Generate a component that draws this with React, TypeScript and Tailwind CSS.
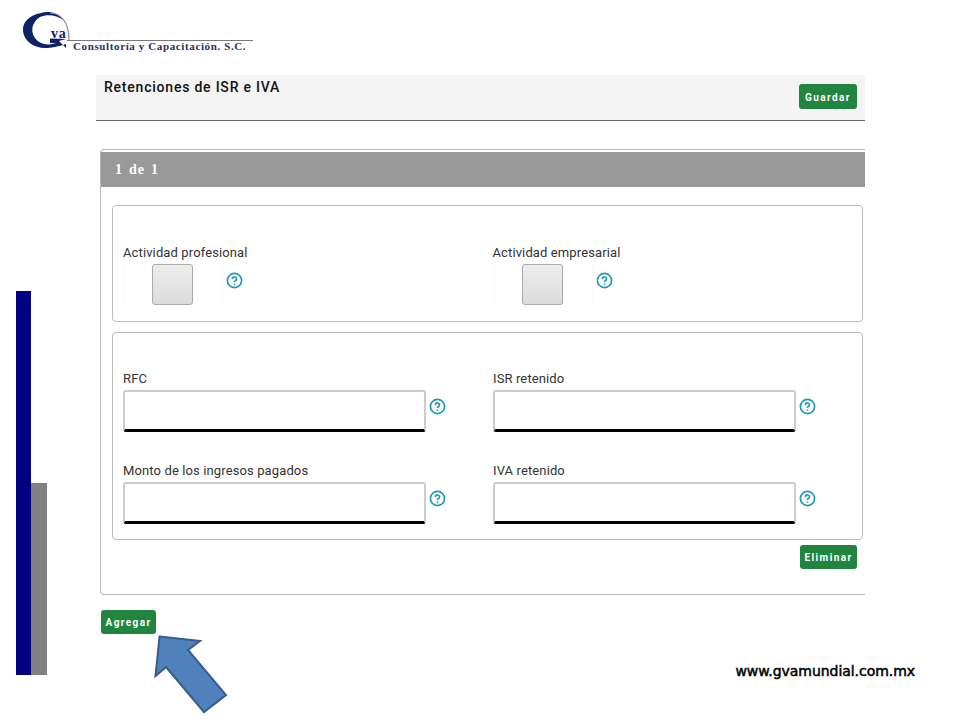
import { CircleHelp } from "lucide-react";

function Help() {
  return <CircleHelp size={17} strokeWidth={2.4} className="text-[#1f9ab5] shrink-0" />;
}

function Btn({ label, w }: { label: string; w: string }) {
  return (
    <button className={`${w} h-[24px] rounded-[3px] bg-[#218540] text-white text-[10px] font-bold tracking-[1.4px] font-['Roboto',sans-serif] flex items-center justify-center pt-[1px]`}>
      {label}
    </button>
  );
}

function Toggle({ label }: { label: string }) {
  return (
    <div className="w-[370px]">
      <div className="text-[13px] leading-[16px] text-[#333] tracking-[0.12px]">{label}</div>
      <div className="flex items-center mt-[3px]">
        <div className="w-[100px] h-[41px] flex pl-[28px] border-x border-[#fafafa]">
          <div className="w-[41px] h-[41px] rounded-[3px] border border-[#aaa] bg-gradient-to-b from-[#ececec] to-[#dcdcdc]" />
        </div>
        <div className="ml-[3px] -mt-[9px]"><Help /></div>
      </div>
    </div>
  );
}

function Field({ label }: { label: string }) {
  return (
    <div className="w-[370px]">
      <div className="text-[13px] leading-[16px] text-[#333] tracking-[0.12px]">{label}</div>
      <div className="flex items-center mt-[3px]">
        <div className="w-[303px] h-[42px] rounded-[3px] border-2 border-[#ccc] border-b-[3px] border-b-black bg-white" />
        <div className="ml-[3px] -mt-[10px]"><Help /></div>
      </div>
    </div>
  );
}

function Logo() {
  return (
    <svg width="260" height="60" viewBox="0 0 260 60" className="block absolute left-0 top-0">
      <path d="M63 20 C58 12 48 11 41 13 C29 15 22 23 23 31 C24 42 36 49 47 48 C54 47.500 60 46 66 44 L66 48 L59 41 L66 39 L50 38.500 L50 43 L56 43 C48 46 39 44 35 38 C30 31 32 22 40 17 C47 14 57 15 63 20 Z" fill="#0d2366" />
      <path d="M50 13 C60 13 69 21 69 40" fill="none" stroke="#8a8f99" strokeWidth="1.200" />
      <text x="51" y="38" fontFamily="'Liberation Serif',serif" fontWeight="700" fontSize="14" letterSpacing="0.800" fill="#0d2366">va</text>
      <line x1="67" y1="40.500" x2="253" y2="40.500" stroke="#777" strokeWidth="1" />
      <text x="73" y="50" fontFamily="'Liberation Serif',serif" fontWeight="700" fontSize="11" letterSpacing="0.620" fill="#26325f">Consultoría y Capacitación. S.C.</text>
    </svg>
  );
}

export default function App() {
  return (
    <div className="relative w-[960px] h-[720px] overflow-hidden bg-white font-['Roboto',sans-serif]">
      <Logo />
      <div className="flex pt-[75px]">
        <div className="w-[96px] pl-[16px] pt-[216px] flex items-start">
          <div className="w-[15px] h-[384px] bg-[#000080]" />
          <div className="w-[16px] h-[192px] mt-[192px] bg-[#808080]" />
        </div>
        <div className="w-[819px]">
          <div className="w-[769px] h-[46px] bg-[#f4f4f4] border-b border-[#666] flex justify-between pl-[8px] pr-[8px]">
            <div className="text-[14px] leading-[16px] mt-[4px] font-medium tracking-[0.78px] text-[#111]">Retenciones de ISR e IVA</div>
            <div className="mt-[9px] h-[25px]"><Btn label="Guardar" w="w-[58px] !h-[25px]" /></div>
          </div>

          <div className="ml-[4px] mt-[28px] w-[765px] h-[446px] border border-r-0 border-[#bbb] rounded-l-[4px] pt-[2px]">
            <div className="h-[35px] bg-[#999] flex items-center pl-[14px] text-white font-bold text-[14px] tracking-[0.8px] [word-spacing:2px] font-['Liberation_Serif',serif]">1 de 1</div>
            <div className="ml-[11px] w-[751px] mt-[18px] h-[117px] border border-[#bbb] rounded-[4px] pl-[10px] pt-[39px] flex">
              <Toggle label="Actividad profesional" />
              <Toggle label="Actividad empresarial" />
            </div>
            <div className="ml-[11px] w-[751px] mt-[10px] h-[208px] border border-[#bbb] rounded-[4px] pl-[10px] pt-[38px] grid grid-cols-[370px_370px] gap-y-[31px] content-start">
              <Field label="RFC" />
              <Field label="ISR retenido" />
              <Field label="Monto de los ingresos pagados" />
              <Field label="IVA retenido" />
            </div>
            <div className="flex justify-end pr-[8px] mt-[5px]"><Btn label="Eliminar" w="w-[57px]" /></div>
          </div>

          <div className="flex justify-between items-start pl-[5px] mt-[15px]">
            <Btn label="Agregar" w="w-[55px]" />
            <div className="mt-[52px] text-[14px] leading-[18px] font-normal tracking-[-0.05px] [-webkit-text-stroke:0.5px_black] font-['DejaVu_Sans',sans-serif] text-black">www.gvamundial.com.mx</div>
          </div>
        </div>
      </div>
      <svg width="90" height="90" viewBox="150 630 90 90" className="absolute left-[150px] top-[630px]">
        <path d="M159.500 636.500 L200 641 L188 650 L226 695 L204 712 L166 667 L155.500 676 Z" fill="#4f81bd" stroke="#385d8a" strokeWidth="2" />
      </svg>
    </div>
  );
}
